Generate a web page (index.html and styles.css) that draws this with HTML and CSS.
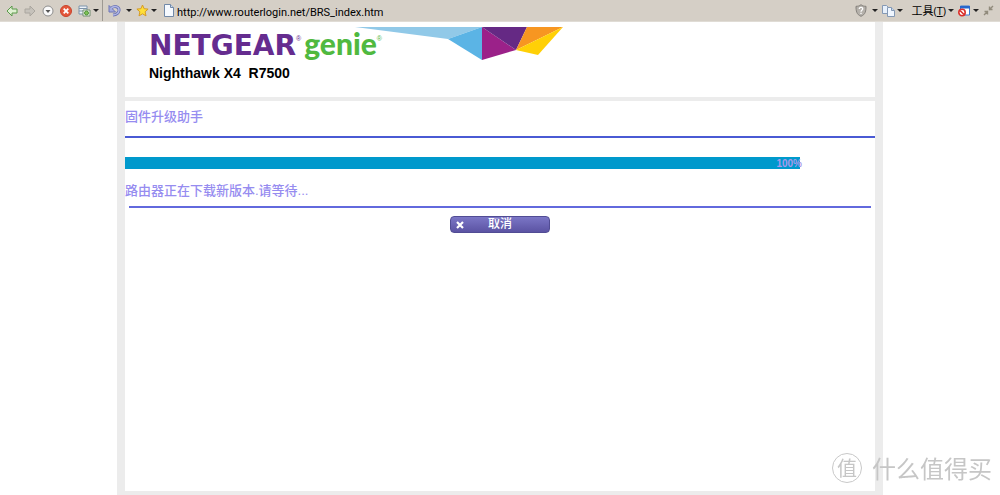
FILE: index.html
```html
<!DOCTYPE html>
<html lang="zh-CN">
<head>
<meta charset="utf-8">
<title>NETGEAR genie</title>
<link rel="stylesheet" href="styles.css">
</head>
<body>
<header class="toolbar">
  <div class="tools">
    <button class="tool" aria-label="后退"><svg width="12" height="12" viewBox="0 0 12 12"><path d="M1 6 6 1v3h5v4H6v3z" fill="#dff0d2" stroke="#5b9a4b"/></svg></button>
    <button class="tool" aria-label="前进"><svg width="12" height="12" viewBox="0 0 12 12"><path d="M11 6 6 1v3H1v4h5v3z" fill="#c6c2bb" stroke="#aaa69f"/></svg></button>
    <button class="tool" aria-label="历史"><svg width="12" height="12" viewBox="0 0 12 12"><circle cx="6" cy="6" r="5" fill="#fafafa" stroke="#8d8d8d"/><path d="M3.500 5h5L6 8z" fill="#555"/></svg></button>
    <button class="tool" aria-label="停止"><svg width="12" height="12" viewBox="0 0 12 12"><circle cx="6" cy="6" r="5.500" fill="#e4573b" stroke="#c8432c"/><path d="m3.700 3.700 4.600 4.600m0-4.600L3.700 8.300" stroke="#fff" stroke-width="1.800"/></svg></button>
    <button class="tool menu" aria-label="新建标签"><svg width="13" height="12" viewBox="0 0 13 12"><path d="M1 1h8v8H1z" fill="#eef3f8" stroke="#7d94ab"/><path d="M1 3.500h8M1 6h8" stroke="#7d94ab"/><path d="M5 5h7v6H5z" fill="#f4faf1" stroke="#718d70"/><circle cx="8.500" cy="8" r="2" fill="#7fc257" stroke="#4e9136"/></svg><i class="arrow"></i></button>
  </div>
  <div class="tools second">
    <button class="tool menu wide" aria-label="撤销"><svg width="13" height="13" viewBox="0 0 13 13"><path d="M3 4.500C6 1 11.500 2.500 11 6.500 10.500 9.500 8 10.800 5 11" fill="none" stroke="#6c74b5" stroke-width="3"/><path d="M1 1.500v6.500h6.500z" fill="#a4abdd" stroke="#6c74b5"/><path d="M3 4.500C6 1 11.500 2.500 11 6.500 10.500 9.500 8 10.800 5 11" fill="none" stroke="#b1b8e6" stroke-width="1.400"/></svg><i class="arrow"></i></button>
    <button class="tool menu" aria-label="收藏"><svg width="13" height="13" viewBox="0 0 13 13"><path d="m6.500 1 1.600 3.700 4 .4-3 2.700.9 4.100-3.500-2.100L3 11.900l.9-4.100-3-2.700 4-.4z" fill="#ffdf38" stroke="#d59b27"/></svg><i class="arrow"></i></button>
  </div>
  <label class="address">
    <svg width="10" height="13" viewBox="0 0 10 13"><path d="M.5.500h6l3 3v9h-9z" fill="#f6faff" stroke="#7189a8"/><path d="M6.500.500v3h3" fill="#cbdcf0" stroke="#7189a8"/></svg>
    <input class="url" type="text" aria-label="地址" value="http://www.routerlogin.net/BRS_index.htm">
  </label>
  <div class="tools end">
    <button class="tool menu wide" aria-label="安全"><svg width="12" height="13" viewBox="0 0 12 13"><path d="M6 .7C4.500 2 2.800 2.300 1 2.300 1 7 1.500 10.500 6 12.300 10.500 10.500 11 7 11 2.300 9.200 2.300 7.500 2 6 .7z" fill="#b5b1ab" stroke="#85817c"/><path d="M4.300 5c0-2.300 3.600-2.200 3.400 0C7.600 6.300 6 6.200 6 7.700M6 8.800v1.300" fill="none" stroke="#fff" stroke-width="1.300"/></svg><i class="arrow"></i></button>
    <button class="tool menu" aria-label="页面"><svg width="13" height="12" viewBox="0 0 13 12"><path d="M.5.500h4l2 2v6h-6z" fill="#e7f0fb" stroke="#8499b5"/><path d="M5.500 2.500h4l3 3v6h-7z" fill="#eff6ff" stroke="#8499b5"/><path d="M9.500 2.500v3h3" fill="#c7d9ee" stroke="#8499b5"/></svg><i class="arrow"></i></button>
    <button class="tool menu text"><span>工具(<u>T</u>)</span><i class="arrow"></i></button>
    <button class="tool menu" aria-label="拦截"><svg width="13" height="12" viewBox="0 0 13 12"><path d="M2.500 1h9v9h-9z" fill="#fff" stroke="#3d79ce"/><path d="M2 1h10v2.500H2z" fill="#2667cd"/><circle cx="4" cy="7.500" r="3.200" fill="#fff" stroke="#db302b" stroke-width="1.600"/><path d="m2 5.500 4 4" stroke="#db302b" stroke-width="1.600"/></svg><i class="arrow"></i></button>
    <button class="tool" aria-label="全屏"><svg width="11" height="11" viewBox="0 0 11 11"><path d="m6 5 4-4M6.500 1.500v3h3M5 6l-4 4M1.500 6.500h3v3" fill="none" stroke="#918b7c" stroke-width="1.400"/></svg></button>
  </div>
</header>
<main class="frame">
  <section class="brand">
    <svg class="gem" width="208" height="34" viewBox="0 0 208 34" aria-hidden="true">
      <path d="M0 0h127L93 12z" fill="#91c9e8"/><path d="M127 0v33L93 12z" fill="#5bb4e5"/><path d="M127 0v33l34-10z" fill="#9b2189"/><path d="M127 0h45l-11 23z" fill="#652984"/><path d="M172 0h36l-47 23z" fill="#f79621"/><path d="M208 0l-25 28-22-5z" fill="#ffd006"/>
    </svg>
    <div class="logo"><span class="netgear">NETGEAR<sup>®</sup></span><span class="genie">genie<sup>®</sup></span></div>
    <h1 class="model">Nighthawk X4&nbsp; R7500</h1>
  </section>
  <section class="panel">
    <h2 class="title">固件升级助手</h2>
    <div class="track"><div class="bar" role="progressbar" aria-label="下载进度" aria-valuenow="100"><span class="percent">100%</span></div></div>
    <p class="status">路由器正在下载新版本.请等待...</p>
    <div class="actions"><button class="cancel"><svg width="8" height="8" viewBox="0 0 8 8"><path d="m1 1 6 6m0-6L1 7" stroke="#fff" stroke-width="2.200"/></svg><span class="caption">取消</span></button></div>
  </section>
</main>
<div class="watermark"><span class="seal">值</span><span>什么值得买</span></div>
</body>
</html>
```
FILE: styles.css
```css
* { box-sizing: border-box; }
body {
  margin: 0;
  min-height: 100vh;
  display: flex;
  flex-direction: column;
  background: #fff;
  color: #000;
  font-family: "Liberation Sans", "Noto Sans CJK SC", sans-serif;
}
button { padding: 0; border: 0; background: none; color: inherit; font: inherit; }
svg { display: block; flex: none; }
.toolbar {
  display: flex;
  align-items: center;
  height: 22px;
  padding: 0 6px;
  background: #d5cfc6;
  border-bottom: 1px solid #e0dcd5;
}
.tools { display: flex; align-items: center; gap: 6px; height: 21px; }
.second { gap: 5px; margin-left: 4px; padding-left: 5px; border-left: 1px solid #9d9992; }
.end { gap: 5px; }
.tool { display: flex; align-items: center; }
.menu { gap: 3px; }
.wide { gap: 6px; }
.arrow { border: 3px solid transparent; border-top-color: #222; border-bottom: 0; }
.tools .arrow { margin: 0 -1px; }
.text { padding-left: 4px; font: 11px/16px "Open Sans", "Noto Sans CJK SC", sans-serif; }
.address { display: flex; align-items: center; flex: 1; gap: 3px; margin-left: 8px; }
.url {
  flex: 1;
  min-width: 0;
  height: 16px;
  margin-top: 4px;
  padding: 0;
  border: 0;
  background: none;
  font: 11px/16px Roboto, sans-serif;
}
.frame {
  flex: 1;
  display: flex;
  flex-direction: column;
  width: 100%;
  max-width: 766px;
  margin: 0 auto;
  border: solid #ececec;
  border-width: 0 8px 4px;
}
.brand { position: relative; padding: 4px 24px 15px; border-bottom: 4px solid #ececec; }
.gem { position: absolute; left: 230px; top: 5px; }
.logo { display: flex; align-items: baseline; gap: 3px; height: 38px; line-height: 34px; white-space: nowrap; }
.netgear { color: #652c8f; font-family: "DejaVu Sans", sans-serif; font-size: 28px; font-weight: 700; }
.genie { color: #50b93f; font-family: Lato, sans-serif; font-size: 30px; font-weight: 900; }
.logo sup { font: 7px/8px "Liberation Sans", sans-serif; vertical-align: 14px; }
.model { margin: 0; font-size: 14px; line-height: 18px; }
.title, .status { margin: 0; color: #968cf0; font-size: 13px; font-weight: 500; line-height: 20px; }
.title { padding: 6px 0 9px; border-bottom: 2px solid #4a5ad4; }
.track { padding: 19px 75px 12px 0; }
.bar { display: flex; justify-content: flex-end; height: 12px; background: #0099cc; }
.percent { margin-right: -2px; color: #a999ec; font: bold 10px/13px "Liberation Sans", sans-serif; }
.status { padding-bottom: 5px; }
.actions { display: flex; justify-content: center; margin: 0 4px; padding-top: 8px; border-top: 2px solid #6269dd; }
.cancel {
  display: flex;
  align-items: center;
  width: 100px;
  height: 17px;
  padding: 0 5px;
  border: 1px solid #514c94;
  border-radius: 4px;
  background: linear-gradient(#7b76c6, #5b53a3);
  color: #fff;
  font-size: 12px;
  font-weight: 500;
  line-height: 15px;
}
.caption { flex: 1; padding-right: 8px; text-align: center; }
.watermark {
  position: fixed;
  right: 8px;
  bottom: 12px;
  display: flex;
  align-items: center;
  gap: 10px;
  color: #c6c6c6;
  font: 24px/30px "Noto Sans CJK SC", sans-serif;
}
.seal {
  width: 30px;
  height: 30px;
  border: 1px solid #c8c8c8;
  border-radius: 50%;
  font-size: 20px;
  line-height: 28px;
  text-align: center;
}
```
